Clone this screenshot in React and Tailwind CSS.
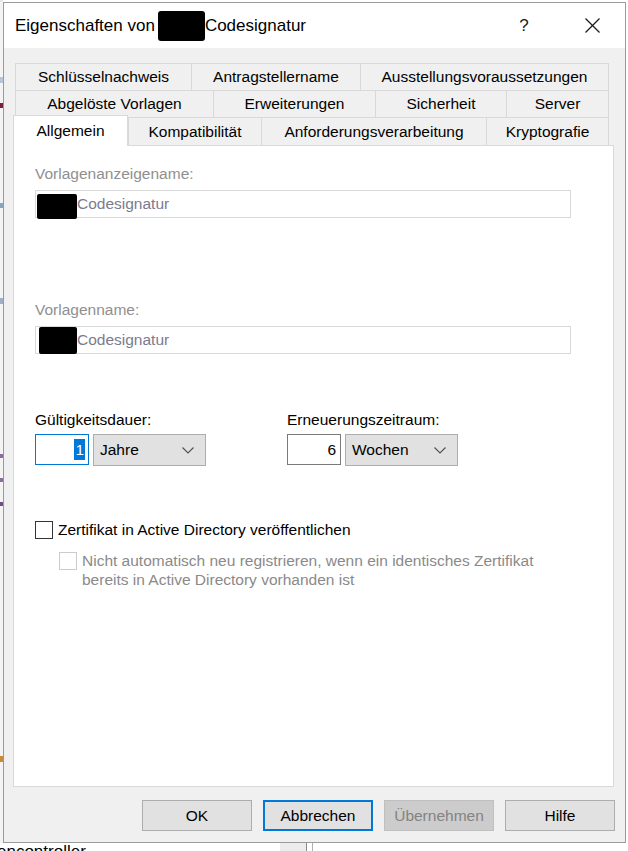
import React from 'react';

const row1 = [
  { t: 'Schlüsselnachweis', c: 'w-[176px]' },
  { t: 'Antragstellername', c: 'w-[169px]' },
  { t: 'Ausstellungsvoraussetzungen', c: 'w-[249px] border-r' },
];
const row2 = [
  { t: 'Abgelöste Vorlagen', c: 'w-[198px]' },
  { t: 'Erweiterungen', c: 'w-[162px]' },
  { t: 'Sicherheit', c: 'w-[131px]' },
  { t: 'Server', c: 'w-[103px] border-r' },
];
const row3 = [
  { t: 'Kompatibilität', c: 'w-[133px]' },
  { t: 'Anforderungsverarbeitung', c: 'w-[225px]' },
  { t: 'Kryptografie', c: 'w-[123px] border-r' },
];

function Tab({ t, c, h }) {
  return (
    <div
      className={`${c} ${h} flex items-center justify-center border-t border-l border-[#d9d9d9] bg-[#f0f0f0] text-black whitespace-nowrap`}
    >
      {t}
    </div>
  );
}

function Chevron() {
  return (
    <svg width="12" height="7" viewBox="0 0 12 7" className="shrink-0">
      <polyline points="0.5,0.5 6,6 11.5,0.5" fill="none" stroke="#505050" strokeWidth="1.1" />
    </svg>
  );
}

function Select({ label }) {
  return (
    <div className="w-[113px] h-[32px] bg-[#e1e1e1] border border-[#adadad] flex items-center justify-between pl-[6px] pr-[11px] text-black">
      <span>{label}</span>
      <Chevron />
    </div>
  );
}

function Button({ children, variant }) {
  if (variant === 'focus') {
    return (
      <div className="w-[110px] h-[31px] bg-[#e1e1e1] border-2 border-[#0078d7] flex items-center justify-center text-black">
        {children}
      </div>
    );
  }
  if (variant === 'disabled') {
    return (
      <div className="w-[110px] h-[31px] bg-[#cccccc] border border-[#bfbfbf] flex items-center justify-center text-[#838383]">
        {children}
      </div>
    );
  }
  return (
    <div className="w-[110px] h-[31px] bg-[#e1e1e1] border border-[#adadad] flex items-center justify-center text-black">
      {children}
    </div>
  );
}

export default function App() {
  return (
    <div className="w-[628px] h-[851px] overflow-hidden bg-white flex flex-col font-['Liberation_Sans',Arial,sans-serif] text-[15.5px] leading-[18px]">
      <div className="h-[2px] flex">
        <div className="w-[3px] bg-[#e8e8e8]" />
      </div>
      <div className="h-[841px] flex">
        {/* background app sliver */}
        <div className="w-[3px] flex flex-col bg-[#f4f4f4]">
          <div className="h-[75px]" />
          <div className="h-[6px] bg-[#b7c6d6]" />
          <div className="h-[20px]" />
          <div className="h-[5px] bg-[#7a1f3d]" />
          <div className="h-[95px]" />
          <div className="h-[5px] bg-[#8aa3c0]" />
          <div className="h-[90px]" />
          <div className="h-[6px] bg-[#9fb0c4]" />
          <div className="h-[150px]" />
          <div className="h-[4px] bg-[#8a6f9e]" />
          <div className="h-[20px]" />
          <div className="h-[4px] bg-[#8a6f9e]" />
          <div className="h-[20px]" />
          <div className="h-[4px] bg-[#6f4f7e]" />
          <div className="h-[250px]" />
          <div className="h-[6px] bg-[#c98a3a]" />
        </div>

        {/* window */}
        <div className="w-[623px] h-[841px] border border-[#9a9a9a] flex flex-col bg-[#f0f0f0]">
          {/* title bar */}
          <div className="h-[45px] bg-white flex items-center pl-[11px] pr-[10px] shrink-0">
            <span className="text-[17px] leading-[20px] text-black">Eigenschaften von</span>
            <span className="ml-[3px] w-[47px] h-[30px] bg-black rounded-[3px] shrink-0" />
            <span className="text-[17px] leading-[20px] text-black">Codesignatur</span>
            <div className="flex-1" />
            <div className="w-[46px] flex items-center justify-center text-[17px] text-[#1a1a1a]">?</div>
            <div className="w-[22px]" />
            <div className="w-[46px] flex items-center justify-center">
              <svg width="15" height="15" viewBox="0 0 15 15">
                <line x1="0.5" y1="0.5" x2="14.5" y2="14.5" stroke="#1a1a1a" strokeWidth="1.2" />
                <line x1="14.5" y1="0.5" x2="0.5" y2="14.5" stroke="#1a1a1a" strokeWidth="1.2" />
              </svg>
            </div>
          </div>

          {/* body */}
          <div className="flex-1 flex flex-col pt-[15px] pl-[9px] pr-[11px]">
            <div className="flex ml-[2px]">
              {row1.map((r) => (
                <Tab key={r.t} t={r.t} c={r.c} h="h-[27px]" />
              ))}
            </div>
            <div className="flex ml-[2px]">
              {row2.map((r) => (
                <Tab key={r.t} t={r.t} c={r.c} h="h-[27px]" />
              ))}
            </div>
            <div className="flex items-end h-[28px]">
              <div className="relative z-10 w-[115px] h-[31px] -mb-[1px] bg-white border-t border-l border-r border-[#d9d9d9] flex items-center justify-center text-black">
                Allgemein
              </div>
              {row3.map((r) => (
                <Tab key={r.t} t={r.t} c={r.c} h="h-[28px]" />
              ))}
            </div>

            {/* panel */}
            <div className="w-[601px] h-[642px] bg-white border border-[#d9d9d9] flex flex-col pl-[21px] pt-[19px]">
              <div className="text-[#8f8f8f]">Vorlagenanzeigename:</div>
              <div className="mt-[7px] w-[536px] h-[28px] border border-[#d9d9d9] bg-white flex items-start pl-[1px]">
                <span className="mt-[3px] w-[40px] h-[25px] bg-black rounded-[2px] shrink-0" />
                <span className="self-center text-[#7b7b8e]">Codesignatur</span>
              </div>

              <div className="mt-[83px] text-[#8f8f8f]">Vorlagenname:</div>
              <div className="mt-[7px] w-[536px] h-[28px] border border-[#d9d9d9] bg-white flex items-start pl-[3px]">
                <span className="mt-[0px] w-[38px] h-[27px] bg-black rounded-[2px] shrink-0" />
                <span className="self-center text-[#7b7b8e]">Codesignatur</span>
              </div>

              <div className="mt-[57px] flex">
                <div className="w-[252px] flex flex-col">
                  <div className="text-black">Gültigkeitsdauer:</div>
                  <div className="mt-[5px] flex items-start gap-[4px]">
                    <div className="w-[54px] h-[31px] border border-[#0078d7] bg-white flex items-center justify-end pr-[3px]">
                      <span className="bg-[#0078d7] text-white h-[21px] leading-[21px] px-[1px]">1</span>
                    </div>
                    <Select label="Jahre" />
                  </div>
                </div>
                <div className="flex flex-col">
                  <div className="text-black">Erneuerungszeitraum:</div>
                  <div className="mt-[5px] flex items-start gap-[4px]">
                    <div className="w-[54px] h-[31px] border border-[#7a7a7a] bg-white flex items-center justify-end pr-[4px] text-black">
                      6
                    </div>
                    <Select label="Wochen" />
                  </div>
                </div>
              </div>

              <div className="mt-[55px] flex items-center gap-[5px]">
                <div className="w-[18px] h-[18px] border border-[#333333] bg-white shrink-0" />
                <span className="text-black">Zertifikat in Active Directory veröffentlichen</span>
              </div>

              <div className="mt-[12px] pl-[24px] flex items-start gap-[5px]">
                <div className="mt-[1px] w-[18px] h-[18px] border border-[#cccccc] bg-white shrink-0" />
                <div className="text-[#8a8a8a] leading-[19px]">
                  Nicht automatisch neu registrieren, wenn ein identisches Zertifikat
                  <br />
                  bereits in Active Directory vorhanden ist
                </div>
              </div>
            </div>

            {/* buttons */}
            <div className="mt-[13px] flex justify-end gap-[11px] -mr-[1px]">
              <Button>OK</Button>
              <Button variant="focus">Abbrechen</Button>
              <Button variant="disabled">Übernehmen</Button>
              <Button>Hilfe</Button>
            </div>
          </div>
        </div>
        <div className="w-[2px] bg-white" />
      </div>

      {/* background app below window */}
      <div className="h-[8px] flex overflow-hidden">
        <div className="w-[280px] overflow-hidden">
          <div className="-ml-[3px] text-[17px] leading-[18px] text-black whitespace-nowrap">encontroller</div>
        </div>
        <div className="w-[26px] bg-[#ececec]" />
        <div className="w-[1px] bg-[#8a8a8a]" />
        <div className="w-[5px]" />
        <div className="w-[1px] bg-[#b0b0b0]" />
      </div>
    </div>
  );
}
